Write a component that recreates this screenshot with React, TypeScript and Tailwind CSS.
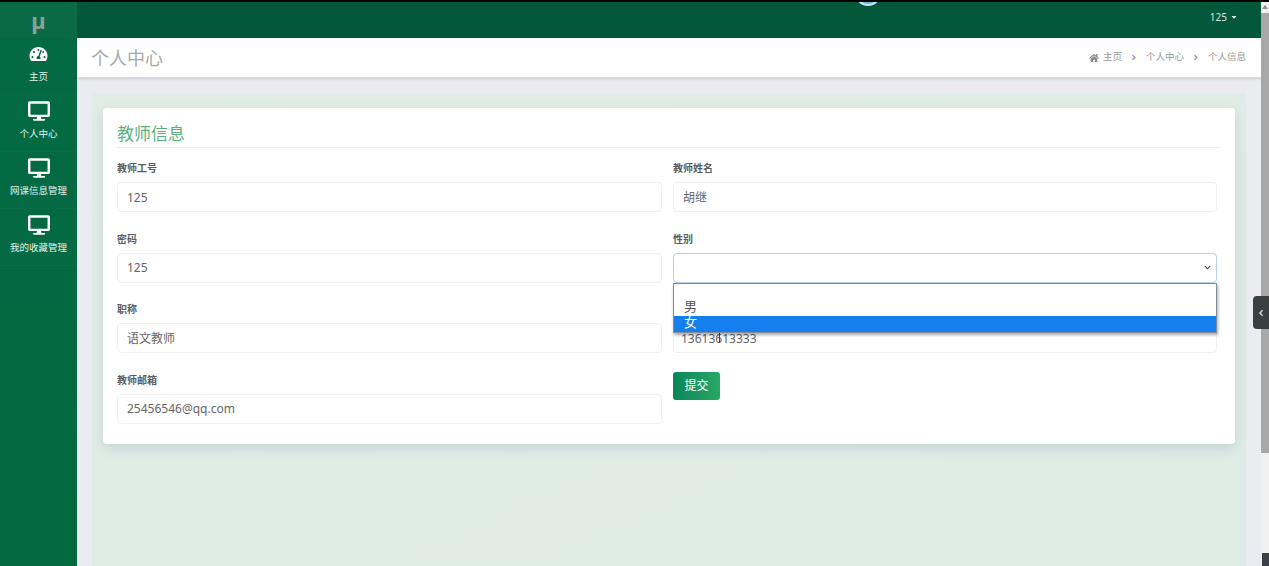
import { FaTachometerAlt, FaDesktop, FaHome, FaCaretDown, FaChevronDown, FaAngleLeft, FaAngleRight } from "react-icons/fa";

const menu = [
  { label: "主页", Icon: FaTachometerAlt, size: "h-[16px] w-[19px] mt-[2px]" },
  { label: "个人中心", Icon: FaDesktop, size: "h-[20px] w-[22px]" },
  { label: "网课信息管理", Icon: FaDesktop, size: "h-[20px] w-[22px]" },
  { label: "我的收藏管理", Icon: FaDesktop, size: "h-[20px] w-[22px]" },
];

function Field({ label, value, inset = "px-[9px]" }: { label: string; value: string; inset?: string }) {
  return (
    <div className="h-[70.67px]">
      <label className="mt-[-2px] block h-[14px] text-[10px] font-semibold leading-[14px] text-[#5c5c5c]">{label}</label>
      <input
        readOnly
        value={value}
        className={`mt-[7px] block h-[30px] w-full rounded border border-[#eef0f2] bg-white text-[12px] text-[#666] outline-none ${inset}`}
      />
    </div>
  );
}

function Sidebar() {
  return (
    <aside className="w-[77px] shrink-0 bg-gradient-to-b from-[#036a45] to-[#05693f] text-white">
      <div className="flex h-[36px] items-center justify-center bg-[#0a6a48] text-[22px] font-bold leading-none text-[#8f9f98]">µ</div>
      {menu.map(({ label, Icon, size }) => (
        <div key={label} className="flex h-[57px] flex-col items-center border-b border-[#0a6c49] pt-[6px]">
          <div className="flex h-[20px] items-start justify-center">
            <Icon className={size} />
          </div>
          <span className="mt-[6px] whitespace-nowrap text-[9.5px] leading-[13px] text-[#e6f0ec]">{label}</span>
        </div>
      ))}
    </aside>
  );
}

function Header() {
  return (
    <header className="relative flex h-[36px] shrink-0 items-center justify-end overflow-hidden bg-[#03573a] pr-[23px] text-[10px] text-[#dfe9e5]">
      <div className="absolute left-[778px] top-[-22px] h-[26px] w-[26px] rounded-full border-2 border-[#cfe6ee] bg-[#6db5e0]" />
      <span className="mt-[-6px] flex items-center gap-[3px]">
        125 <FaCaretDown className="h-[8px] w-[8px]" />
      </span>
    </header>
  );
}

function TitleBar() {
  return (
    <div className="flex h-[40px] shrink-0 items-center justify-between border-b border-[#d8dadd] bg-white px-[15px] shadow-sm">
      <h1 className="ml-[-1px] mt-[2px] text-[18px] font-normal text-[#a8a8a8]">个人中心</h1>
      <nav className="flex items-center text-[9.5px] text-[#999]">
        <FaHome className="mr-[4px] h-[10px] w-[10px] text-[#888]" />
        <span>主页</span>
        <FaAngleRight className="mx-[8px] h-[9px] w-[8px] text-[#999]" />
        <span>个人中心</span>
        <FaAngleRight className="mx-[8px] h-[9px] w-[8px] text-[#999]" />
        <span>个人信息</span>
      </nav>
    </div>
  );
}

function GenderSelect() {
  return (
    <div className="relative h-[70.67px]">
      <label className="mt-[-2px] block h-[14px] text-[10px] font-semibold leading-[14px] text-[#5c5c5c]">性别</label>
      <div className="mt-[7px] flex h-[30px] items-center justify-end rounded border border-[#b4d2e8] bg-white pr-[5px]">
        <FaChevronDown className="h-[7px] w-[7px] text-[#444]" />
      </div>
      <ul className="absolute left-0 right-0 top-[49px] z-10 h-[50px] border border-[#7f8c99] bg-white pt-[16px] text-[13px] text-[#555] shadow-[1px_2px_3px_rgba(0,0,0,0.35)]">
        <li className="h-[16px] pl-[10px] leading-[12px]">男</li>
        <li className="h-[16px] bg-[#167ff0] pl-[10px] leading-[12px] text-white">女</li>
      </ul>
    </div>
  );
}

export default function App() {
  return (
    <div className="relative flex h-[566px] w-[1269px] flex-col overflow-hidden bg-[#eaecf2] font-['Noto_Sans','Noto_Sans_CJK_SC',sans-serif]">
      <div className="h-[2px] shrink-0 bg-black" />
      <div className="flex min-h-0 flex-1">
        <Sidebar />
        <div className="flex min-w-0 flex-1 flex-col">
          <Header />
          <TitleBar />
          <main className="min-h-0 flex-1 px-[15px] pt-[15px]">
            <div className="h-[500px] bg-gradient-to-br from-[#e2ede7] to-[#dfebe5] px-[11px] pt-[15px]">
              <section className="h-[336px] rounded-sm bg-white px-[14px] shadow-[0_4px_12px_rgba(120,140,160,0.25)]">
                <h2 className="h-[40px] border-b border-[#eef0f0] pt-[14px] text-[17px] font-normal leading-[23px] text-[#5eb07f]">教师信息</h2>
                <div className="grid grid-cols-[545px_544px] gap-x-[11px] pt-[15px]">
                  <Field label="教师工号" value="125" />
                  <Field label="教师姓名" value="胡继" />
                  <Field label="密码" value="125" />
                  <GenderSelect />
                  <Field label="职称" value="语文教师" />
                  <div className="relative">
                    <Field label="联系电话" value="13613613333" inset="px-[7px]" />
                    <div className="absolute left-[46px] top-[26px] h-[13px] w-px bg-[#444]" />
                  </div>
                  <Field label="教师邮箱" value="25456546@qq.com" />
                  <div>
                    <button className="mt-[-3px] block h-[28px] w-[47px] rounded-[3px] bg-gradient-to-r from-[#07855a] to-[#2aa766] text-[12px] text-white">提交</button>
                  </div>
                </div>
              </section>
            </div>
          </main>
        </div>
        <div className="w-[8px] shrink-0 bg-[#f1f1f1]">
          <div className="mx-auto mt-[3px] h-0 w-0 border-x-[3px] border-b-[4px] border-x-transparent border-b-[#8a8a8a]" />
          <div className="mt-[4px] h-[440px] bg-[#a8a8a8]" />
        </div>
      </div>
      <div className="absolute right-0 top-[296px] flex h-[33px] w-[16px] items-center justify-center rounded-l-sm bg-[#3a3f3f] text-[#cfcfcf]">
        <FaAngleLeft className="h-[10px] w-[10px]" />
      </div>
      <div className="absolute bottom-0 right-0 h-[13px] w-[7px] bg-[#3a4046]" />
    </div>
  );
}
